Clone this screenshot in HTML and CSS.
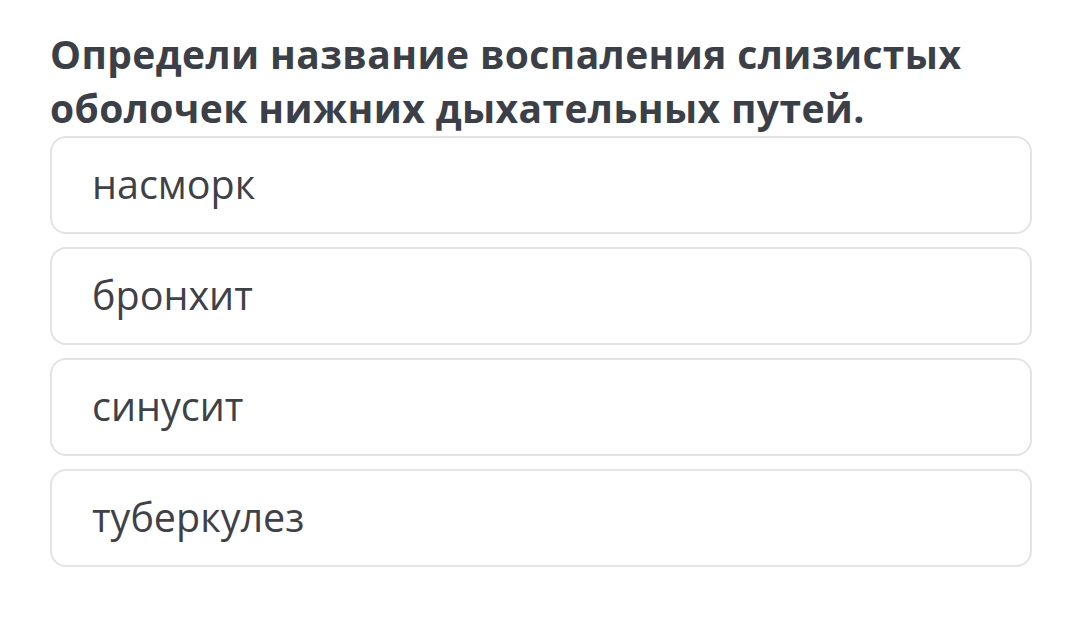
FILE: index.html
```html
<!DOCTYPE html>
<html lang="ru">
<head>
<meta charset="utf-8">
<link rel="stylesheet" href="styles.css">
</head>
<body>
<div class="page">
  <h1 class="question">Определи название воспаления слизистых оболочек нижних дыхательных путей.</h1>
  <div class="options">
    <div class="option">насморк</div>
    <div class="option">бронхит</div>
    <div class="option">синусит</div>
    <div class="option">туберкулез</div>
  </div>
</div>
</body>
</html>
```
FILE: styles.css
```css
html, body {
  margin: 0;
  padding: 0;
  background: #ffffff;
}
.page {
  width: 1080px;
  height: 636px;
  box-sizing: border-box;
  padding: 27px 48px 0 50px;
  font-family: "Open Sans", "Noto Sans", sans-serif;
}
.question {
  margin: 0;
  font-size: 39px;
  line-height: 54px;
  font-weight: 700;
  color: #3b4048;
  letter-spacing: 0.4px;
}
.options {
  display: flex;
  flex-direction: column;
  gap: 13px;
  margin-top: 1px;
}
.option {
  height: 98px;
  box-sizing: border-box;
  border: 2px solid #e3e3e3;
  border-radius: 16px;
  padding: 0 40px 3px;
  display: flex;
  align-items: center;
  font-size: 39.5px;
  color: #3e4248;
}
```
